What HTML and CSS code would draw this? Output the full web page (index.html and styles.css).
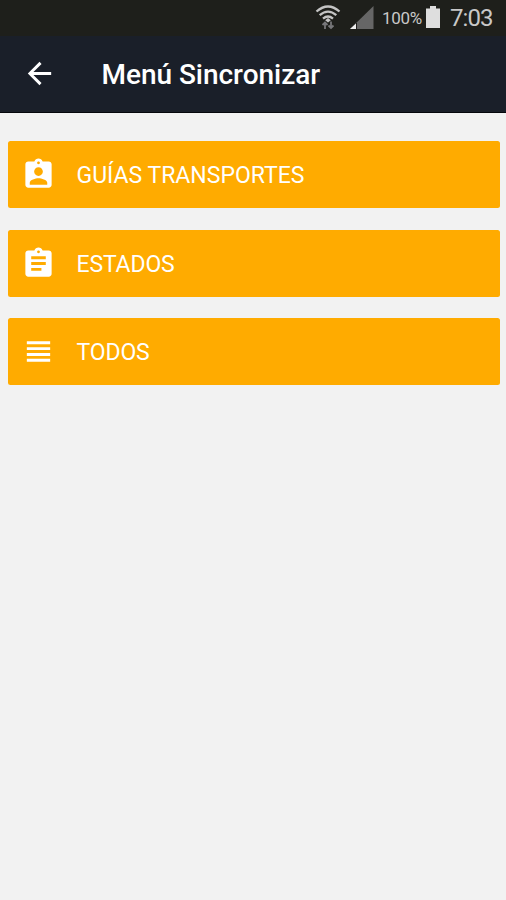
FILE: index.html
```html
<!DOCTYPE html>
<html lang="es">
<head>
<meta charset="utf-8">
<title>Menú Sincronizar</title>
<link rel="stylesheet" href="styles.css">
</head>
<body>
<div class="status">
  <svg class="wifi" viewBox="0 0 26 26" fill="none" stroke="#c4c4c4" stroke-width="2.3">
    <path d="M1.500 7.500Q13 -2.500 24.500 7.500M4.700 11.200Q13 4 21.300 11.200M8 14.700Q13 10.400 18 14.700"/>
    <path d="M13 14l2.800 2.200-2.800 2.300-2.800-2.300z" fill="#c4c4c4" stroke="none"/>
    <path d="M10 25v-6M7.500 21L10 18.500l2.500 2.500M16 17.500v6.500M13.500 21.500l2.500 2.500 2.500-2.500" stroke="#77777a" stroke-width="1.800"/>
  </svg>
  <svg class="signal" viewBox="0 0 24 24"><path d="M23.500 0v23H0z" fill="#666"/><path d="M6 17.500V23H0z" fill="#eee"/><path d="M6.500 17v6" stroke="#20201e"/></svg>
  <span class="percent">100%</span>
  <svg class="battery" viewBox="0 0 16 24"><path d="M5 1h6v2.500h4V23H1V3.500h4z" fill="#dedede"/></svg>
  <span class="clock">7:03</span>
</div>
<header class="bar">
  <svg class="icon" viewBox="0 0 24 24"><path d="M20 11H7.830l5.590-5.590L12 4l-8 8 8 8 1.410-1.410L7.830 13H20v-2z"/></svg>
  <h1 class="title">Menú Sincronizar</h1>
</header>
<main class="menu">
  <button class="item">
    <svg class="icon" viewBox="0 0 24 24"><path d="M19 3h-4.180C14.400 1.840 13.300 1 12 1c-1.300 0-2.400.84-2.820 2H5c-1.100 0-2 .9-2 2v14c0 1.100.9 2 2 2h14c1.100 0 2-.9 2-2V5c0-1.100-.9-2-2-2zm-7 0c.55 0 1 .45 1 1s-.45 1-1 1-1-.45-1-1 .45-1 1-1zm0 4c1.660 0 3 1.340 3 3s-1.340 3-3 3-3-1.340-3-3 1.340-3 3-3zm6 12H6v-1.400c0-2 4-3.100 6-3.100s6 1.100 6 3.100V19z"/></svg>
    <span class="label">GUÍAS TRANSPORTES</span>
  </button>
  <button class="item">
    <svg class="icon" viewBox="0 0 24 24"><path d="M19 3h-4.180C14.400 1.840 13.300 1 12 1c-1.300 0-2.400.84-2.820 2H5c-1.100 0-2 .9-2 2v14c0 1.100.9 2 2 2h14c1.100 0 2-.9 2-2V5c0-1.100-.9-2-2-2zm-7 0c.55 0 1 .45 1 1s-.45 1-1 1-1-.45-1-1 .45-1 1-1zm2 14H7v-2h7v2zm3-4H7v-2h10v2zm0-4H7V7h10v2z"/></svg>
    <span class="label">ESTADOS</span>
  </button>
  <button class="item">
    <svg class="icon" viewBox="0 0 24 24"><path d="M4 15h16v-2H4v2zm0 4h16v-2H4v2zm0-8h16V9H4v2zm0-6v2h16V5H4z"/></svg>
    <span class="label">TODOS</span>
  </button>
</main>
</body>
</html>
```
FILE: styles.css
```css
* { box-sizing: border-box; }
body {
  margin: 0;
  min-height: 900px;
  background: #f2f2f2;
  font-family: Roboto, sans-serif;
  color: #fff;
}
.status {
  height: 36px;
  display: flex;
  align-items: center;
  justify-content: flex-end;
  padding-right: 13px;
  background: #1e1f1b;
  color: #c8c8c8;
}
.wifi { width: 26px; height: 26px; margin-right: 9px; margin-top: -3px; }
.signal { width: 24px; height: 24px; margin-right: 8px; margin-top: -1px; }
.percent { width: 39px; font-size: 17px; white-space: nowrap; letter-spacing: -0.3px; }
.battery { width: 16px; height: 24px; margin: -2px 9px 0 4px; }
.clock { width: 43px; font-size: 24px; line-height: 36px; white-space: nowrap; letter-spacing: -0.9px; }
.icon { width: 35px; height: 35px; fill: #fff; flex: none; }
.bar {
  height: 77px;
  display: flex;
  align-items: center;
  padding-left: 22px;
  background: #1a1f29;
  border-bottom: 1px solid #05070c;
}
.bar .icon { margin-top: -1px; }
.title {
  margin: 1px 0 0 44.500px;
  font-size: 28px;
  font-weight: 500;
  line-height: 36px;
  letter-spacing: -0.03px;
  white-space: nowrap;
}
.menu {
  display: flex;
  flex-direction: column;
  gap: 21.500px;
  padding: 28px 6.500px 0 7.500px;
}
.item {
  height: 67px;
  display: flex;
  align-items: center;
  padding: 0 0 0 13px;
  border: 0;
  border-radius: 2.500px;
  background: #ffab00;
  color: #fff;
  font: 400 23px/30px Roboto, sans-serif;
}
.label { margin: 3px 0 0 21px; white-space: nowrap; }
.item:not(:first-child) .label { letter-spacing: -0.15px; }
```
